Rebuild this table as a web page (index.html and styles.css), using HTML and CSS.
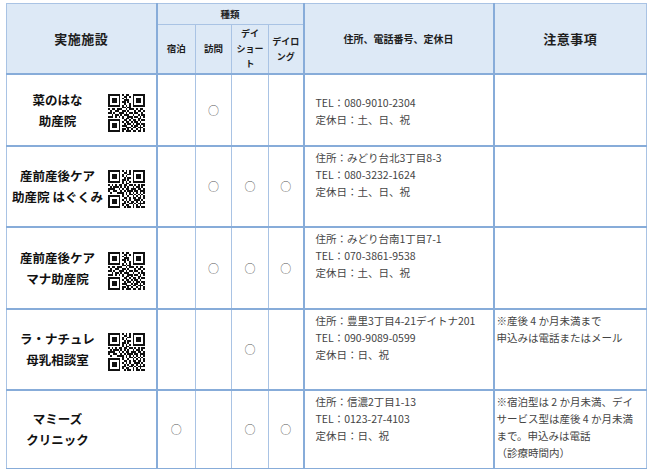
FILE: index.html
```html
<!DOCTYPE html>
<html lang="ja">
<head>
<meta charset="utf-8">
<title>実施施設一覧</title>
<link rel="stylesheet" href="styles.css">
</head>
<body>
<svg class="defs" aria-hidden="true">
  <defs>
    <path id="qrdata" d="M8 .5h1M10 .5h2M9 1.5h2M12 1.5h1M8 2.5h1M10 2.5h1M9 3.5h3M8 4.5h2M11 4.5h1M9 5.5h1M12 5.5h1M8 6.5h1M10 6.5h1M12 6.5h1M8 7.5h2M11 7.5h2M0 8.5h1M2 8.5h2M5 8.5h3M10 8.5h1M12 8.5h3M16 8.5h1M18 8.5h2M1 9.5h1M4 9.5h2M8 9.5h2M11 9.5h1M15 9.5h1M17 9.5h2M20 9.5h1M0 10.5h2M3 10.5h1M6 10.5h3M10 10.5h1M12 10.5h2M15 10.5h2M19 10.5h1M2 11.5h1M4 11.5h2M7 11.5h1M9 11.5h3M14 11.5h1M17 11.5h1M19 11.5h2M0 12.5h3M4 12.5h1M6 12.5h1M8 12.5h1M11 12.5h3M15 12.5h2M18 12.5h1M20 12.5h1M8 13.5h1M10 13.5h2M13 13.5h1M17 13.5h2M9 14.5h2M12 14.5h1M14 14.5h2M17 14.5h1M19 14.5h2M8 15.5h1M10 15.5h2M13 15.5h1M15 15.5h2M18 15.5h1M9 16.5h1M11 16.5h2M14 16.5h1M16 16.5h2M19 16.5h2M8 17.5h3M13 17.5h1M15 17.5h2M18 17.5h1M20 17.5h1M10 18.5h3M14 18.5h2M17 18.5h3M8 19.5h2M11 19.5h1M13 19.5h1M16 19.5h1M18 19.5h1M20 19.5h1M8 20.5h1M10 20.5h3M14 20.5h2M17 20.5h2M20 20.5h1"/>
    <g id="finders">
      <path fill="none" stroke="#111" d="M.5 .5h6v6h-6zM14.5 .5h6v6h-6zM.5 14.5h6v6h-6z"/>
      <path fill="#111" d="M2 2h3v3h-3zM16 2h3v3h-3zM2 16h3v3h-3z"/>
    </g>
    <symbol id="qr1" viewBox="0 0 21 21" preserveAspectRatio="none">
      <use href="#finders"/>
      <use href="#qrdata" stroke="#111" fill="none"/>
    </symbol>
    <symbol id="qr2" viewBox="0 0 21 21" preserveAspectRatio="none">
      <use href="#finders"/>
      <use href="#qrdata" stroke="#111" fill="none" transform="matrix(0 1 1 0 0 0)"/>
    </symbol>
  </defs>
</svg>
<div class="page">
<table class="grid">
  <colgroup>
    <col class="c-fac">
    <col class="c-stay">
    <col class="c-visit">
    <col class="c-short">
    <col class="c-long">
    <col class="c-addr">
    <col class="c-note">
  </colgroup>
  <thead>
    <tr class="h1">
      <th rowspan="2" class="big thick-r">実施施設</th>
      <th colspan="4" class="small thick-r">種類</th>
      <th rowspan="2" class="mid thick-r">住所、電話番号、定休日</th>
      <th rowspan="2" class="big">注意事項</th>
    </tr>
    <tr class="h2">
      <th class="small">宿泊</th>
      <th class="small">訪問</th>
      <th class="small tiny">デイ<br>ショー<br>ト</th>
      <th class="small tiny thick-r">デイロ<br>ング</th>
    </tr>
  </thead>
  <tbody>
    <tr class="r1">
      <td class="fac thick-r"><div class="fac-in"><div class="name">菜のはな<br>助産院</div><svg class="qr"><use href="#qr1"/></svg></div></td>
      <td class="mark"></td>
      <td class="mark">○</td>
      <td class="mark"></td>
      <td class="mark thick-r"></td>
      <td class="addr thick-r"><br>TEL：080-9010-2304<br>定休日：土、日、祝</td>
      <td class="note"></td>
    </tr>
    <tr class="r2">
      <td class="fac thick-r"><div class="fac-in"><div class="name">産前産後ケア<br>助産院 はぐくみ</div><svg class="qr"><use href="#qr2"/></svg></div></td>
      <td class="mark"></td>
      <td class="mark">○</td>
      <td class="mark">○</td>
      <td class="mark thick-r">○</td>
      <td class="addr thick-r">住所：みどり台北3丁目8-3<br>TEL：080-3232-1624<br>定休日：土、日、祝</td>
      <td class="note"></td>
    </tr>
    <tr class="r3">
      <td class="fac thick-r"><div class="fac-in"><div class="name">産前産後ケア<br>マナ助産院</div><svg class="qr"><use href="#qr1"/></svg></div></td>
      <td class="mark"></td>
      <td class="mark">○</td>
      <td class="mark">○</td>
      <td class="mark thick-r">○</td>
      <td class="addr thick-r">住所：みどり台南1丁目7-1<br>TEL：070-3861-9538<br>定休日：土、日、祝</td>
      <td class="note"></td>
    </tr>
    <tr class="r4">
      <td class="fac thick-r"><div class="fac-in"><div class="name">ラ・ナチュレ<br>母乳相談室</div><svg class="qr"><use href="#qr2"/></svg></div></td>
      <td class="mark"></td>
      <td class="mark"></td>
      <td class="mark">○</td>
      <td class="mark thick-r"></td>
      <td class="addr thick-r">住所：豊里3丁目4-21デイトナ201<br>TEL：090-9089-0599<br>定休日：日、祝</td>
      <td class="note">※産後 4 か月未満まで<br>申込みは電話またはメール</td>
    </tr>
    <tr class="r5">
      <td class="fac thick-r"><div class="fac-in"><div class="name">マミーズ<br>クリニック</div></div></td>
      <td class="mark">○</td>
      <td class="mark"></td>
      <td class="mark">○</td>
      <td class="mark thick-r">○</td>
      <td class="addr thick-r">住所：信濃2丁目1-13<br>TEL：0123-27-4103<br>定休日：日、祝</td>
      <td class="note">※宿泊型は 2 か月未満、デイ<br>サービス型は産後 4 か月未満<br>まで。申込みは電話<br>（診療時間内）</td>
    </tr>
  </tbody>
</table>
</div>
</body>
</html>
```

FILE: styles.css
```css
html, body {
  margin: 0;
  padding: 0;
  background: #ffffff;
}

.defs {
  position: absolute;
  width: 0;
  height: 0;
  overflow: hidden;
}

.page {
  padding: 3px 0 0 6px;
  font-family: "Noto Sans CJK JP", "Noto Sans", sans-serif;
  color: #222;
}

.grid {
  border-collapse: collapse;
  table-layout: fixed;
  width: 640px;
}

.c-fac { width: 150px; }
.c-stay { width: 39px; }
.c-visit { width: 36px; }
.c-short { width: 37px; }
.c-long { width: 35px; }
.c-addr { width: 190px; }
.c-note { width: 153px; }

.grid th,
.grid td {
  border: 1px solid #a9c3e4;
  padding: 0;
}

.grid th {
  background: #dde9f6;
  font-weight: 700;
  color: #1e1e1e;
  text-align: center;
  vertical-align: middle;
}

.grid .thick-r {
  border-right: 2px solid #87acd9;
}

.grid thead tr.h2 th,
.grid thead tr.h1 th[rowspan] {
  border-bottom: 2px solid #87acd9;
}

.grid tbody tr td {
  border-bottom: 2px solid #87acd9;
}

.grid tbody tr.r5 td {
  border-bottom: 1px solid #87acd9;
}

.h1 { height: 21px; }
.h2 { height: 49px; }

.big {
  font-size: 13px;
  letter-spacing: 0.5px;
}

.mid {
  font-size: 10px;
}

.small {
  font-size: 9.5px;
  line-height: 15px;
}

.tiny {
  font-size: 9px;
}

.r1 { height: 72px; }
.r2 { height: 81px; }
.r3 { height: 82px; }
.r4 { height: 81px; }
.r5 { height: 79px; }

.fac {
  vertical-align: middle;
}

.fac-in {
  display: flex;
  align-items: center;
}

.name {
  width: 101px;
  text-align: center;
  font-weight: 700;
  font-size: 12.5px;
  line-height: 21px;
  color: #111;
}

.qr {
  width: 37px;
  height: 38px;
  margin-top: 6px;
  shape-rendering: crispEdges;
}

.mark {
  text-align: center;
  vertical-align: middle;
  font-size: 11px;
  color: #555;
}

.grid .addr,
.grid .note {
  vertical-align: top;
  font-size: 10.5px;
  line-height: 17px;
  color: #444;
}

.grid .addr {
  padding: 2px 0 0 11px;
}

.grid .note {
  padding: 2px 0 0 2px;
}
```
